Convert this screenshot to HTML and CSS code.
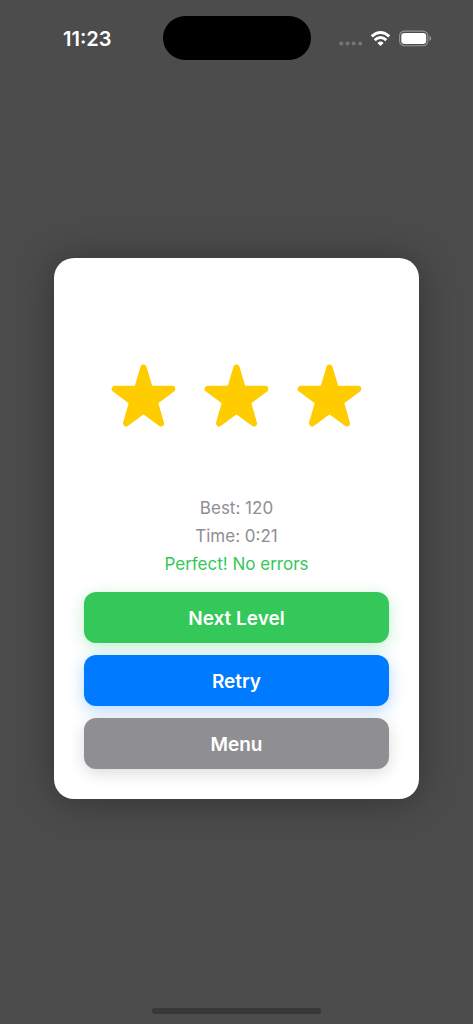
FILE: index.html
```html
<!DOCTYPE html>
<html lang="en">
<head>
<meta charset="utf-8">
<meta name="viewport" content="width=device-width, initial-scale=1">
<title>Level complete</title>
<link rel="stylesheet" href="styles.css">
</head>
<body>
<svg class="defs" aria-hidden="true">
  <symbol id="star" viewBox="0.500 0 66 64">
    <path d="M33 3.800 39.300 25H61.600L44.200 38 50.300 59.300 33 46.500 15.700 59.300 21.800 38 4.400 25H26.700Z" fill="currentColor" stroke="currentColor" stroke-width="6.400" stroke-linejoin="round"/>
  </symbol>
</svg>
<div class="screen">
  <header class="status-bar">
    <time class="clock">11:23</time>
    <div class="island"></div>
    <div class="indicators">
      <svg class="cellular" viewBox="0 0 24 16" aria-hidden="true">
        <g fill="#757575"><circle cx="2.300" cy="12.500" r="2.100"/><circle cx="8.500" cy="12.500" r="2.100"/><circle cx="14.700" cy="12.500" r="2.100"/><circle cx="21.200" cy="12.500" r="2.100"/></g>
      </svg>
      <svg class="wifi" viewBox="0.500 0.500 20 16" aria-hidden="true">
        <g fill="none" stroke="#fff" stroke-width="2.900"><path d="M1.200 5.800Q10-2 18.800 5.800"/><path d="M4.200 9.600Q10 4.400 15.800 9.600"/></g>
        <path d="M6.900 12.400Q10 9.700 13.100 12.400L10 15.600Z" fill="#fff"/>
      </svg>
      <svg class="battery" viewBox="0 0.500 33 16" aria-hidden="true">
        <rect x=".6" y=".6" width="28.300" height="14.600" rx="4.800" fill="none" stroke="#959595" stroke-width="1.100"/>
        <rect x="2.300" y="2.400" width="24.900" height="11" rx="3.200" fill="#fff"/>
        <path d="M30.400 5.300Q32.200 6 32.200 7.900T30.400 10.500Z" fill="#959595"/>
      </svg>
    </div>
  </header>
  <main class="stage">
    <section class="card" role="dialog" aria-label="Level complete">
      <div class="stars" role="img" aria-label="3 of 3 stars">
        <svg class="star"><use href="#star"/></svg>
        <svg class="star"><use href="#star"/></svg>
        <svg class="star"><use href="#star"/></svg>
      </div>
      <div class="results">
        <p class="result">Best: 120</p>
        <p class="result">Time: 0:21</p>
        <p class="result result-perfect">Perfect! No errors</p>
      </div>
      <div class="actions">
        <button class="action action-next" type="button">Next Level</button>
        <button class="action action-retry" type="button">Retry</button>
        <button class="action action-menu" type="button">Menu</button>
      </div>
    </section>
  </main>
  <footer class="home"><div class="home-bar"></div></footer>
</div>
</body>
</html>
```
FILE: styles.css
```css
* {
  box-sizing: border-box;
}

body {
  margin: 0;
  background: #4c4c4c;
  font-family: Inter, "Liberation Sans", sans-serif;
}

.defs {
  display: none;
}

.screen {
  display: flex;
  flex-direction: column;
  min-height: 100vh;
}

.status-bar {
  display: grid;
  grid-template-columns: 1fr 148px 1fr;
  align-items: center;
  padding-top: 16px;
}

.clock {
  padding: 2px 0 0 12px;
  color: #fff;
  font-size: 20px;
  font-weight: 600;
  line-height: 24px;
  text-align: center;
}

.island {
  height: 44px;
  border-radius: 22px;
  background: #000;
}

.indicators {
  display: flex;
  align-items: center;
  justify-content: center;
  gap: 8px;
  padding: 2px 12px 0 0;
}

.cellular {
  width: 24px;
  height: 16px;
}

.wifi {
  width: 20px;
  height: 16px;
  overflow: visible;
}

.battery {
  width: 33px;
  height: 16px;
  overflow: visible;
}

.stage {
  display: flex;
  flex: 1;
  flex-direction: column;
  justify-content: center;
  padding: 0 54px 12px;
}

.card {
  padding: 106px 30px 30px;
  border-radius: 20px;
  background: #fff;
  box-shadow: 0 2px 40px rgb(0 0 0 / 35%);
}

.stars {
  display: flex;
  justify-content: center;
  gap: 27px;
}

.star {
  width: 66px;
  height: 64px;
  color: #fc0;
}

.results {
  display: flex;
  flex-direction: column;
  gap: 8px;
  margin-top: 70px;
}

.result {
  margin: 0;
  color: #8e8e93;
  font-size: 17px;
  line-height: 20px;
  text-align: center;
}

.result-perfect {
  color: #34c759;
}

.actions {
  display: flex;
  flex-direction: column;
  gap: 12px;
  margin-top: 18px;
}

.action {
  padding: 14px 12px 12px;
  border: 0;
  border-radius: 12px;
  color: #fff;
  font-family: inherit;
  font-size: 19px;
  font-weight: 600;
  line-height: 25px;
}

.action-next {
  background: #34c759;
  box-shadow: 0 4px 16px rgb(52 199 89 / 30%);
}

.action-retry {
  background: #007aff;
  box-shadow: 0 4px 16px rgb(0 122 255 / 30%);
}

.action-menu {
  background: #8e8e93;
  box-shadow: 0 4px 16px rgb(0 0 0 / 15%);
}

.home {
  display: flex;
  justify-content: center;
  padding-bottom: 10px;
}

.home-bar {
  width: 169px;
  height: 6px;
  border-radius: 3px;
  background: #383838;
}
```
